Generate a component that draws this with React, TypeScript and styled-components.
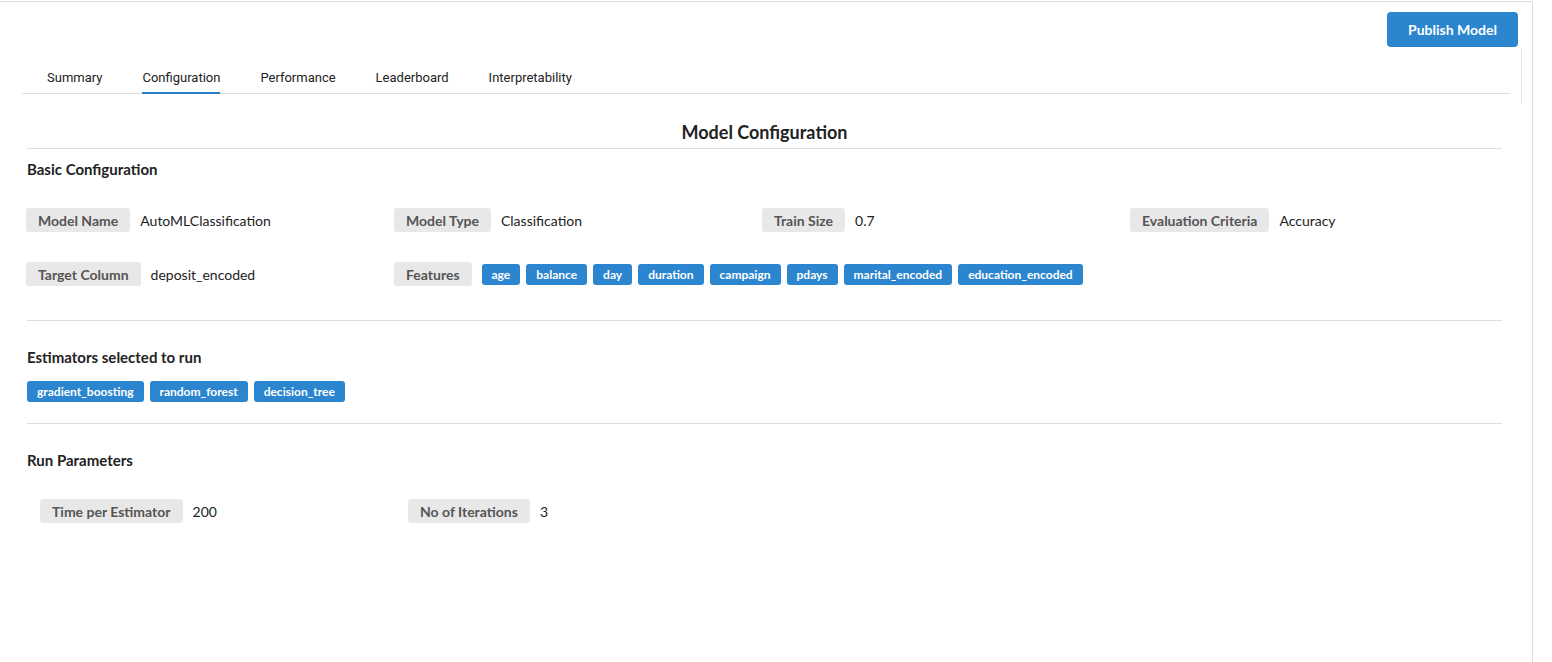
import React from "react"
import styled, { createGlobalStyle } from "styled-components"

const GlobalStyle = createGlobalStyle`
  html, body {
    margin: 0;
    padding: 0;
    background: #fff;
  }
  body {
    font-family: Lato, "Liberation Sans", sans-serif;
    color: #222;
  }
`

const tabs = ["Summary", "Configuration", "Performance", "Leaderboard", "Interpretability"]
const features = ["age", "balance", "day", "duration", "campaign", "pdays", "marital_encoded", "education_encoded"]
const estimators = ["gradient_boosting", "random_forest", "decision_tree"]

const App: React.FC = () => {
  return (
    <>
      <GlobalStyle />
      <Frame>
        <TopBar>
          <PublishButton>Publish Model</PublishButton>
        </TopBar>
        <TabWrapper>
          <TabList>
            {tabs.map((t) => (
              <Tab key={t} $active={t === "Configuration"}>
                {t}
              </Tab>
            ))}
          </TabList>
        </TabWrapper>

        <Content>
          <Title>Model Configuration</Title>

          <SectionHeading>Basic Configuration</SectionHeading>
          <FieldGrid>
            <Field>
              <Label>Model Name</Label>
              <Value>AutoMLClassification</Value>
            </Field>
            <Field>
              <Label>Model Type</Label>
              <Value>Classification</Value>
            </Field>
            <Field>
              <Label>Train Size</Label>
              <Value>0.7</Value>
            </Field>
            <Field>
              <Label>Evaluation Criteria</Label>
              <Value>Accuracy</Value>
            </Field>
            <Field>
              <Label>Target Column</Label>
              <Value>deposit_encoded</Value>
            </Field>
            <Field $span={3}>
              <Label>Features</Label>
              <TagRow>
                {features.map((f) => (
                  <Tag key={f}>{f}</Tag>
                ))}
              </TagRow>
            </Field>
          </FieldGrid>

          <Divider $top={34} />

          <SectionHeading>Estimators selected to run</SectionHeading>
          <TagRow $top={15}>
            {estimators.map((e) => (
              <Tag key={e}>{e}</Tag>
            ))}
          </TagRow>

          <Divider $top={21} />

          <SectionHeading>Run Parameters</SectionHeading>
          <FieldGrid $indent={14}>
            <Field>
              <Label>Time per Estimator</Label>
              <Value>200</Value>
            </Field>
            <Field>
              <Label>No of Iterations</Label>
              <Value>3</Value>
            </Field>
          </FieldGrid>
        </Content>
      </Frame>
    </>
  )
}

export default App

const Frame = styled.div`
  box-sizing: border-box;
  width: 1533px;
  height: 661px;
  margin-top: 1px;
  border-top: 1px solid #ddd;
  border-right: 1px solid #ddd;
`

const TopBar = styled.div`
  display: flex;
  justify-content: flex-end;
  padding: 10px 14px 0 0;
`

const PublishButton = styled.button`
  height: 35px;
  padding: 0 21px;
  border: none;
  border-radius: 4px;
  background: #2b86cf;
  color: #fff;
  font-family: Lato, "Liberation Sans", sans-serif;
  font-size: 14px;
  font-weight: 700;
  cursor: pointer;
`

const TabWrapper = styled.div`
  width: 1499px;
  height: 55px;
  padding-left: 22px;
  border-right: 1px solid #e4e4e4;
  margin-top: 1px;
`

const TabList = styled.div`
  display: flex;
  gap: 40px;
  width: 1488px;
  padding: 22px 0 0 25px;
  box-sizing: border-box;
  border-bottom: 1px solid #ddd;
`

const Tab = styled.div<{ $active?: boolean }>`
  font-family: Roboto, "Noto Sans", sans-serif;
  font-size: 13px;
  line-height: 16px;
  color: #222;
  padding-bottom: 6px;
  border-bottom: 2px solid ${(p) => (p.$active ? "#2b7fc4" : "transparent")};
  margin-bottom: -1px;
  cursor: pointer;
`

const Content = styled.div`
  padding: 0 30px 0 27px;
`

const Title = styled.h2`
  margin: 18px 0 0;
  padding-bottom: 5px;
  border-bottom: 1px solid #ddd;
  text-align: center;
  font-size: 18px;
  line-height: 22px;
  font-weight: 700;
  color: #222;
`

const SectionHeading = styled.h3`
  margin: 11px 0 0;
  font-size: 15px;
  line-height: 18px;
  font-weight: 700;
  color: #222;
`

const Divider = styled.hr<{ $top: number }>`
  margin: ${(p) => p.$top}px 0 27px;
  border: none;
  border-top: 1px solid #ddd;
  height: 0;
  & + h3 {
    margin-top: 0;
  }
`

const FieldGrid = styled.div<{ $indent?: number }>`
  display: grid;
  grid-template-columns: repeat(4, 368px);
  row-gap: 30px;
  margin: 30px 0 0 ${(p) => (p.$indent || 0) - 1}px;
`

const Field = styled.div<{ $span?: number }>`
  display: flex;
  align-items: center;
  gap: 10px;
  grid-column: span ${(p) => p.$span || 1};
`

const Label = styled.span`
  display: inline-flex;
  align-items: center;
  height: 24px;
  padding: 0 12px;
  border-radius: 3px;
  background: #e8e8e8;
  color: #555;
  font-size: 14px;
  font-weight: 700;
  white-space: nowrap;
`

const Value = styled.span`
  font-size: 14px;
  color: #222;
  white-space: nowrap;
`

const TagRow = styled.div<{ $top?: number }>`
  display: flex;
  flex-wrap: wrap;
  gap: 6px;
  margin-top: ${(p) => p.$top || 0}px;
`

const Tag = styled.span`
  display: inline-flex;
  align-items: center;
  height: 21px;
  padding: 0 10px;
  border-radius: 3px;
  background: #2b86cf;
  color: #fff;
  font-size: 12px;
  font-weight: 700;
  white-space: nowrap;
`
